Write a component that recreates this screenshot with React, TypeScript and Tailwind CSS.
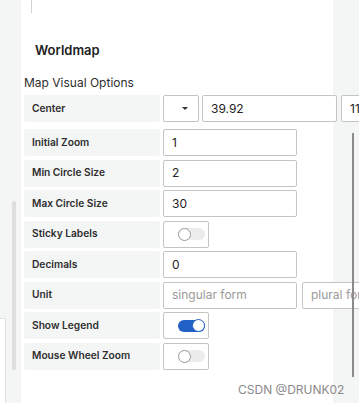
import React from "react";

const font = { fontFamily: "Inter, 'Noto Sans', sans-serif" };

function Label({ children }: { children: React.ReactNode }) {
  return (
    <div className="w-[136px] h-[27px] shrink-0 rounded-[2px] bg-[#f4f5f5] flex items-center pl-[8px] text-[10.2px] font-semibold text-[#2e2e2e]">
      {children}
    </div>
  );
}

function Input({ value, placeholder, w = 134 }: { value?: string; placeholder?: string; w?: number }) {
  return (
    <div
      className="h-[27px] shrink-0 rounded-[2px] border border-[#c4c4c4] bg-white flex items-center pl-[8px] text-[12px]"
      style={{ width: w }}
    >
      {value ? (
        <span className="text-[#222]">{value}</span>
      ) : (
        <span className="text-[#9a9a9a]">{placeholder}</span>
      )}
    </div>
  );
}

function Toggle({ on }: { on?: boolean }) {
  return (
    <div className="w-[46px] h-[27px] shrink-0 rounded-[2px] border border-[#c4c4c4] bg-white flex items-center justify-end pr-[3px]">
      <div
        className={
          on
            ? "relative w-[27px] h-[12px] rounded-full bg-[#2160c4]"
            : "relative w-[27px] h-[12px] rounded-full bg-[#ececec]"
        }
      >
        <div
          className={
            on
              ? "absolute right-0 top-[-0.5px] w-[13px] h-[13px] rounded-full bg-white border-[1.5px] border-[#2160c4]"
              : "absolute left-0 top-[-0.5px] w-[13px] h-[13px] rounded-full bg-white border border-[#9a9a9a]"
          }
        />
      </div>
    </div>
  );
}

function Row({ label, children }: { label: string; children: React.ReactNode }) {
  return (
    <div className="flex gap-[3px] h-[27px]">
      <Label>{label}</Label>
      {children}
    </div>
  );
}

export default function App() {
  return (
    <div className="relative w-[359px] h-[403px] overflow-hidden bg-[#f4f5f5]" style={font}>
      {/* left scrollbar thumb */}
      <div className="absolute left-[12px] top-[201px] w-[4px] h-[169px] rounded-full bg-[#dedede]" />
      {/* partial white panel bottom-left */}
      <div className="absolute left-0 top-[318px] w-[6px] h-[100px] bg-white border-t border-r border-[#e2e2e2]" />

      <div className="ml-[21px] w-[312px] h-full bg-white">
        <div className="ml-[10px] w-px h-[13px] bg-[#d2d2d2]" />
        <div className="mt-[29px] pl-[14px] text-[13px] font-semibold text-[#222] leading-[16px]">Worldmap</div>
        <div className="mt-[17px] pl-[3px] text-[12px] text-[#2e2e2e] leading-[15px]">Map Visual Options</div>
        <div className="mt-[5px] pl-[3px] flex flex-col">
          <div className="flex h-[27px]">
            <Label>Center</Label>
            <div className="ml-[3px] w-[36px] h-[27px] shrink-0 rounded-[2px] border border-[#c4c4c4] bg-white flex items-center justify-end pr-[10px]">
              <div className="w-0 h-0 border-l-[3px] border-r-[3px] border-t-[3px] border-l-transparent border-r-transparent border-t-[#333]" />
            </div>
            <div className="ml-[3px]">
              <Input value="39.92" w={135} />
            </div>
            <div className="ml-[4px]">
              <Input value="116.46" w={80} />
            </div>
          </div>
          <div className="mt-[7px] flex flex-col gap-[3.5px]">
            <Row label="Initial Zoom"><Input value="1" /></Row>
            <Row label="Min Circle Size"><Input value="2" /></Row>
            <Row label="Max Circle Size"><Input value="30" /></Row>
            <Row label="Sticky Labels"><Toggle /></Row>
            <Row label="Decimals"><Input value="0" /></Row>
            <Row label="Unit">
              <Input placeholder="singular form" />
              <div className="ml-[2px]">
                <Input placeholder="plural form" w={100} />
              </div>
            </Row>
            <Row label="Show Legend"><Toggle on /></Row>
            <Row label="Mouse Wheel Zoom"><Toggle /></Row>
          </div>
        </div>
      </div>

      {/* right scrollbar */}
      <div className="absolute left-[352px] top-[133px] w-[2px] h-[244px] bg-[#8b8b8b]" />
      {/* watermark */}
      <div className="absolute left-[238px] top-[382px] text-[12px] text-[#8a8a8a] leading-[15px]">CSDN @DRUNK02</div>
    </div>
  );
}
